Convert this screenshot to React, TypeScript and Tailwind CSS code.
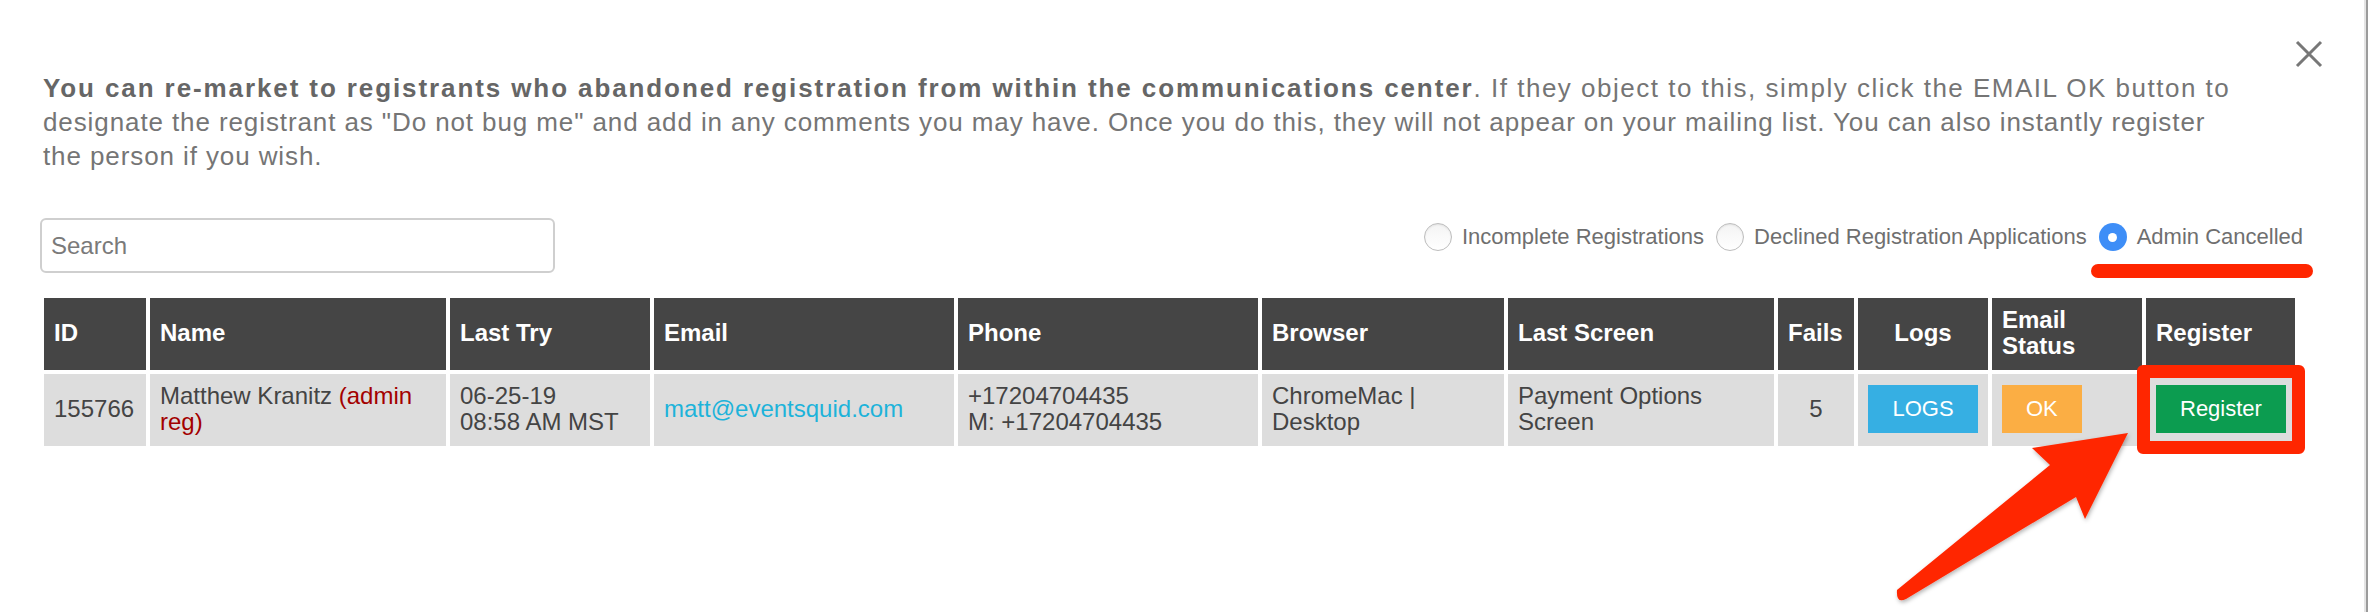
import React from "react";

const cols =
  "grid-cols-[102px_296px_200px_300px_300px_242px_266px_76px_130px_150px_149px]";

function Radio({ checked, label }: { checked?: boolean; label: string }) {
  return (
    <label className="flex items-center gap-[10px]">
      {checked ? (
        <span className="flex h-[28px] w-[28px] items-center justify-center rounded-full bg-[#3e8ef7]">
          <span className="h-[9px] w-[9px] rounded-full bg-white" />
        </span>
      ) : (
        <span className="h-[28px] w-[28px] rounded-full border-[1.5px] border-[#bdbdbd] bg-gradient-to-b from-[#f4f4f4] to-white shadow-[inset_0_1px_2px_rgba(0,0,0,0.08)]" />
      )}
      <span className="text-[22px] leading-[28px] text-[#6f6f6f]">{label}</span>
    </label>
  );
}

export default function App() {
  const th =
    "flex items-center bg-[#454545] px-[10px] pb-[3px] text-[24px] font-bold leading-[26px] text-white";
  const td =
    "flex items-center bg-[#dddddd] px-[10px] pb-[2px] text-[24px] leading-[26px] text-[#444]";
  return (
    <div className="relative h-[612px] w-[2368px] overflow-hidden border-r-2 border-[#9b9b9b] bg-white font-['Liberation_Sans',Arial,sans-serif]">
      <div className="h-full border-r-2 border-[#e4e4e4] pl-[40px] pt-[71px]">
        <p className="whitespace-nowrap pl-[3px] text-[26px] leading-[34px] tracking-[0.9px] text-[#757575]">
          <b className="tracking-[1.9px] text-[#666]">
            You can re-market to registrants who abandoned registration from within the
            communications center
          </b>
          <span className="tracking-[1.5px]">
            . If they object to this, simply click the EMAIL OK button to
          </span>
          <br />
          designate the registrant as "Do not bug me" and add in any comments you may have.
          Once you do this, they will not appear on your mailing list. You can also instantly
          register
          <br />
          the person if you wish.
        </p>

        <div className="mt-[45px] flex w-[2263px] items-start justify-between">
          <div className="flex h-[55px] w-[515px] items-center rounded-[6px] border-2 border-[#cfcfcf] bg-white px-[9px]">
            <span className="text-[24px] text-[#7a7a7a]">Search</span>
          </div>
          <div className="mt-[5px] flex items-center gap-[12px]">
            <Radio label="Incomplete Registrations" />
            <Radio label="Declined Registration Applications" />
            <Radio checked label="Admin Cancelled" />
          </div>
        </div>

        <div className={`ml-[4px] mt-[25px] grid ${cols} auto-rows-[72px] gap-[4px]`}>
          <div className={th}>ID</div>
          <div className={th}>Name</div>
          <div className={th}>Last Try</div>
          <div className={th}>Email</div>
          <div className={th}>Phone</div>
          <div className={th}>Browser</div>
          <div className={th}>Last Screen</div>
          <div className={th}>Fails</div>
          <div className={`${th} justify-center`}>Logs</div>
          <div className={th}>
            Email
            <br />
            Status
          </div>
          <div className={th}>Register</div>

          <div className={td}>155766</div>
          <div className={td}>
            <span>
              Matthew Kranitz <span className="text-[#a30000]">(admin reg)</span>
            </span>
          </div>
          <div className={td}>
            <span>
              06-25-19
              <br />
              08:58 AM MST
            </span>
          </div>
          <div className={td}>
            <span className="text-[#1db3da]">matt@eventsquid.com</span>
          </div>
          <div className={td}>
            <span>
              +17204704435
              <br />
              M: +17204704435
            </span>
          </div>
          <div className={td}>
            <span>
              ChromeMac |
              <br />
              Desktop
            </span>
          </div>
          <div className={td}>
            <span>
              Payment Options
              <br />
              Screen
            </span>
          </div>
          <div className={`${td} justify-center`}>5</div>
          <div className={`${td} justify-center`}>
            <button className="h-[48px] bg-[#36afe3] px-[24px] text-[22px] text-white">
              LOGS
            </button>
          </div>
          <div className={td}>
            <button className="h-[48px] bg-[#fbae44] px-[24px] text-[22px] text-white">
              OK
            </button>
          </div>
          <div className={td}>
            <button className="h-[48px] bg-[#0c9c50] px-[24px] text-[22px] text-white">
              Register
            </button>
          </div>
        </div>
      </div>

      {/* close icon */}
      <svg
        className="absolute left-[2295px] top-[40px]"
        width="28"
        height="28"
        viewBox="0 0 28 28"
      >
        <path d="M2 2 L26 26 M26 2 L2 26" stroke="#777" strokeWidth="3" />
      </svg>

      {/* annotation: underline */}
      <div className="absolute left-[2091px] top-[264px] h-[14px] w-[222px] rounded-full bg-[#ff2600]" />

      {/* annotation: box around Register */}
      <div className="absolute left-[2137px] top-[365px] h-[89px] w-[168px] rounded-[6px] border-[13px] border-[#ff2600]" />

      {/* annotation: arrow */}
      <svg
        className="pointer-events-none absolute left-0 top-0"
        width="2368"
        height="612"
        viewBox="0 0 2368 612"
      >
        <defs>
          <filter id="sh" x="-20%" y="-20%" width="140%" height="140%">
            <feDropShadow dx="1" dy="2" stdDeviation="2" floodColor="#000" floodOpacity="0.3" />
          </filter>
        </defs>
        <path
          d="M1897 590 L2050 465 L2032 448 L2128 433 L2085 519 L2076 497 L1906 599 Q1896 604 1897 590 Z"
          fill="#ff2600"
          filter="url(#sh)"
        />
      </svg>
    </div>
  );
}
